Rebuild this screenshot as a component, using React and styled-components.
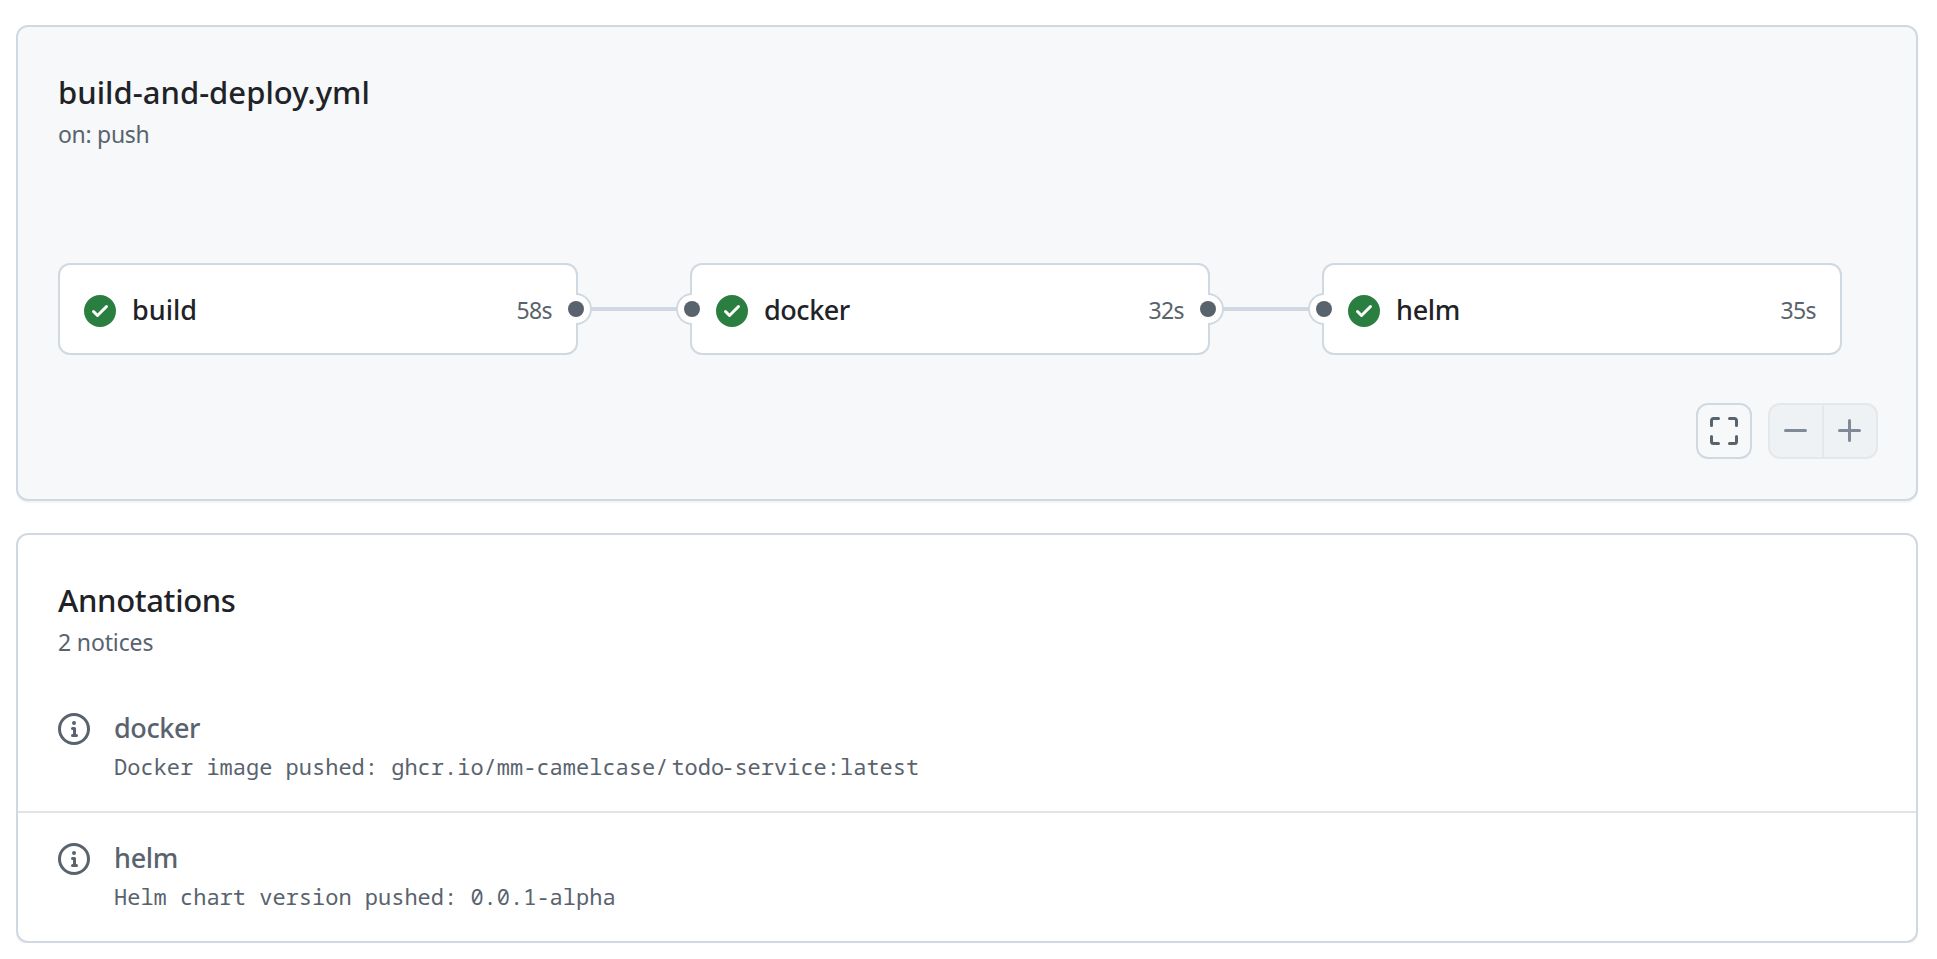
import React from 'react';
import styled, { createGlobalStyle } from 'styled-components';

const color = {
  fg: '#1f2328',
  muted: '#59636e',
  border: '#d0d9e1',
  inset: '#f6f8fa',
  success: '#2a7f40',
};

const GlobalStyle = createGlobalStyle`
  *, *::before, *::after { box-sizing: border-box; }
  body {
    margin: 0;
    background: #fff;
    color: ${color.fg};
    font-family: 'Noto Sans', sans-serif;
  }
`;

const Page = styled.main`
  display: flex;
  flex-direction: column;
  gap: 32px;
  padding: 25px 19px 0 16px;
`;

const Panel = styled.section`
  display: flex;
  flex-direction: column;
  height: ${(p) => p.$height}px;
  padding-top: 41px;
  background: ${(p) => (p.$inset ? color.inset : '#fff')};
  border: 2px solid ${color.border};
  border-radius: 12px;
  box-shadow: 0 2px 1px rgba(31, 35, 40, 0.05);
`;

const PanelHeader = styled.header`
  padding: 0 40px;
`;

const Title = styled.h2`
  margin: 0;
  font-size: 31px;
  font-weight: 500;
  line-height: 48px;
  letter-spacing: ${(p) => p.$tracking}px;
`;

const Subtitle = styled.p`
  margin: 0;
  color: ${color.muted};
  font-size: 23px;
  line-height: 36px;
  letter-spacing: ${(p) => p.$tracking}px;
`;

const Graph = styled.div`
  display: flex;
  align-items: flex-start;
  margin: 111px 0 0 40px;
`;

const JobCard = styled.div`
  position: relative;
  display: flex;
  align-items: center;
  width: 520px;
  height: 92px;
  padding: 4px 24px 0;
  background: #fff;
  border: 2px solid ${color.border};
  border-radius: 12px;
`;

const JobName = styled.span`
  flex: 1;
  margin: 0 0 2px 16px;
  font-size: 27px;
  font-weight: 500;
  line-height: 40px;
  letter-spacing: ${(p) => p.$tracking}px;
`;

const JobTime = styled.span`
  margin-bottom: 2px;
  color: ${color.muted};
  font-size: 23px;
  line-height: 36px;
  letter-spacing: -0.6px;
`;

const Connector = styled.div`
  width: 112px;
  height: 4px;
  margin-top: 44px;
  background: ${color.border};
`;

const Port = styled.span`
  position: absolute;
  top: 28px;
  ${(p) => p.$side}: -16px;
  width: 16px;
  height: 32px;
  background: #fff;
  border: 2px solid ${color.border};
  border-${(p) => (p.$side === 'left' ? 'right' : 'left')}: 0;
  border-radius: ${(p) => (p.$side === 'left' ? '16px 0 0 16px' : '0 16px 16px 0')};

  &::before {
    content: '';
    position: absolute;
    top: 0;
    ${(p) => (p.$side === 'left' ? 'right' : 'left')}: -2px;
    width: 2px;
    height: 28px;
    background: #fff;
  }

  &::after {
    content: '';
    position: absolute;
    top: 6px;
    ${(p) => (p.$side === 'left' ? 'right' : 'left')}: -8px;
    width: 16px;
    height: 16px;
    border-radius: 50%;
    background: ${color.muted};
  }
`;

const Controls = styled.div`
  display: flex;
  justify-content: flex-end;
  gap: 16px;
  margin: 48px 38px 0 0;
`;

const FullscreenButton = styled.button`
  display: flex;
  align-items: center;
  justify-content: center;
  width: 56px;
  height: 56px;
  padding: 0;
  color: ${color.muted};
  background: ${color.inset};
  border: 2px solid ${color.border};
  border-radius: 12px;
`;

const ZoomGroup = styled.div`
  display: flex;
  height: 56px;
  overflow: hidden;
  background: #eff2f5;
  border: 2px solid #e4e8eb;
  border-radius: 12px;
`;

const ZoomButton = styled.button`
  display: flex;
  align-items: center;
  justify-content: center;
  box-sizing: content-box;
  width: 52px;
  padding: 0;
  color: #818b98;
  background: transparent;
  border: 0;

  & + & {
    border-left: 2px solid #e4e8eb;
  }
`;

const NoticeList = styled.ul`
  margin: 23px 0 0;
  padding: 0;
  list-style: none;
`;

const Notice = styled.li`
  display: flex;
  gap: 24px;
  box-sizing: content-box;
  height: 104px;
  padding: 24px 40px 0;
  color: ${color.muted};

  & + & {
    border-top: 2px solid #dfe4e9;
  }

  > svg {
    margin-top: 6px;
  }
`;

const NoticeTitle = styled.h3`
  margin: 0;
  font-size: 27px;
  font-weight: 500;
  line-height: 41px;
  letter-spacing: ${(p) => p.$tracking}px;
`;

const NoticeMessage = styled.code`
  display: block;
  font-family: 'Noto Sans Mono', monospace;
  font-size: 22px;
  line-height: 36px;
`;

const Nudge = styled.span`
  margin: 0 -3px 0 3px;
`;

const Svg = styled.svg`
  flex: none;
  display: block;
  fill: ${(p) => p.$fill || 'currentColor'};
`;

const paths = {
  check:
    'M8 16A8 8 0 1 1 8 0a8 8 0 0 1 0 16Zm3.78-9.72a.751.751 0 0 0-.018-1.042.751.751 0 0 0-1.042-.018L6.75 9.19 5.28 7.72a.751.751 0 0 0-1.042.018.751.751 0 0 0-.018 1.042l2 2a.75.75 0 0 0 1.06 0Z',
  info: 'M0 8a8 8 0 1 1 16 0A8 8 0 0 1 0 8Zm8-6.5a6.5 6.5 0 1 0 0 13 6.5 6.5 0 0 0 0-13ZM6.5 7.75A.75.75 0 0 1 7.25 7h1a.75.75 0 0 1 .75.75v2.75h.25a.75.75 0 0 1 0 1.5h-2a.75.75 0 0 1 0-1.5h.25v-2h-.25a.75.75 0 0 1-.75-.75ZM8 6a1 1 0 1 1 0-2 1 1 0 0 1 0 2Z',
  full: 'M1.75 10a.75.75 0 0 1 .75.75v2.5c0 .138.112.25.25.25h2.5a.75.75 0 0 1 0 1.5h-2.5A1.75 1.75 0 0 1 1 13.25v-2.5a.75.75 0 0 1 .75-.75Zm12.5 0a.75.75 0 0 1 .75.75v2.5A1.75 1.75 0 0 1 13.25 15h-2.5a.75.75 0 0 1 0-1.5h2.5a.25.25 0 0 0 .25-.25v-2.5a.75.75 0 0 1 .75-.75ZM2.75 2.5a.25.25 0 0 0-.25.25v2.5a.75.75 0 0 1-1.5 0v-2.5C1 1.784 1.784 1 2.75 1h2.5a.75.75 0 0 1 0 1.5ZM10 1.75a.75.75 0 0 1 .75-.75h2.5c.966 0 1.75.784 1.75 1.75v2.5a.75.75 0 0 1-1.5 0v-2.5a.25.25 0 0 0-.25-.25h-2.5a.75.75 0 0 1-.75-.75Z',
  minus: 'M2 7.75A.75.75 0 0 1 2.75 7h10a.75.75 0 0 1 0 1.5h-10A.75.75 0 0 1 2 7.75Z',
  plus: 'M7.75 2a.75.75 0 0 1 .75.75V7h4.25a.75.75 0 0 1 0 1.5H8.5v4.25a.75.75 0 0 1-1.5 0V8.5H2.75a.75.75 0 0 1 0-1.5H7V2.75A.75.75 0 0 1 7.75 2Z',
};

function Icon({ name, fill }) {
  return (
    <Svg width="32" height="32" viewBox="0 0 16 16" $fill={fill} aria-hidden="true">
      <path d={paths[name]} />
    </Svg>
  );
}

const jobs = [
  { name: 'build', time: '58s', tracking: 0 },
  { name: 'docker', time: '32s', tracking: -0.45 },
  { name: 'helm', time: '35s', tracking: -0.3 },
];

export default function App() {
  return (
    <>
      <GlobalStyle />
      <Page>
        <Panel $inset $height={476}>
          <PanelHeader>
            <Title $tracking={0.02}>build-and-deploy.yml</Title>
            <Subtitle $tracking={-0.3}>on: push</Subtitle>
          </PanelHeader>
          <Graph>
            {jobs.map((job, i) => (
              <React.Fragment key={job.name}>
                {i > 0 && <Connector />}
                <JobCard>
                  {i > 0 && <Port $side="left" />}
                  <Icon name="check" fill={color.success} />
                  <JobName $tracking={job.tracking}>{job.name}</JobName>
                  <JobTime>{job.time}</JobTime>
                  {i < jobs.length - 1 && <Port $side="right" />}
                </JobCard>
              </React.Fragment>
            ))}
          </Graph>
          <Controls>
            <FullscreenButton aria-label="Full screen">
              <Icon name="full" />
            </FullscreenButton>
            <ZoomGroup>
              <ZoomButton aria-label="Zoom out" disabled>
                <Icon name="minus" />
              </ZoomButton>
              <ZoomButton aria-label="Zoom in" disabled>
                <Icon name="plus" />
              </ZoomButton>
            </ZoomGroup>
          </Controls>
        </Panel>

        <Panel $height={410}>
          <PanelHeader>
            <Title $tracking={-0.35}>Annotations</Title>
            <Subtitle $tracking={-0.14}>2 notices</Subtitle>
          </PanelHeader>
          <NoticeList>
            <Notice>
              <Icon name="info" />
              <div>
                <NoticeTitle $tracking={-0.4}>docker</NoticeTitle>
                <NoticeMessage>
                  Docker image pushed: ghcr.io/mm-camelcase/<Nudge>todo</Nudge>-service:latest
                </NoticeMessage>
              </div>
            </Notice>
            <Notice>
              <Icon name="info" />
              <div>
                <NoticeTitle $tracking={-0.3}>helm</NoticeTitle>
                <NoticeMessage>Helm chart version pushed: 0.0.1-alpha</NoticeMessage>
              </div>
            </Notice>
          </NoticeList>
        </Panel>
      </Page>
    </>
  );
}
